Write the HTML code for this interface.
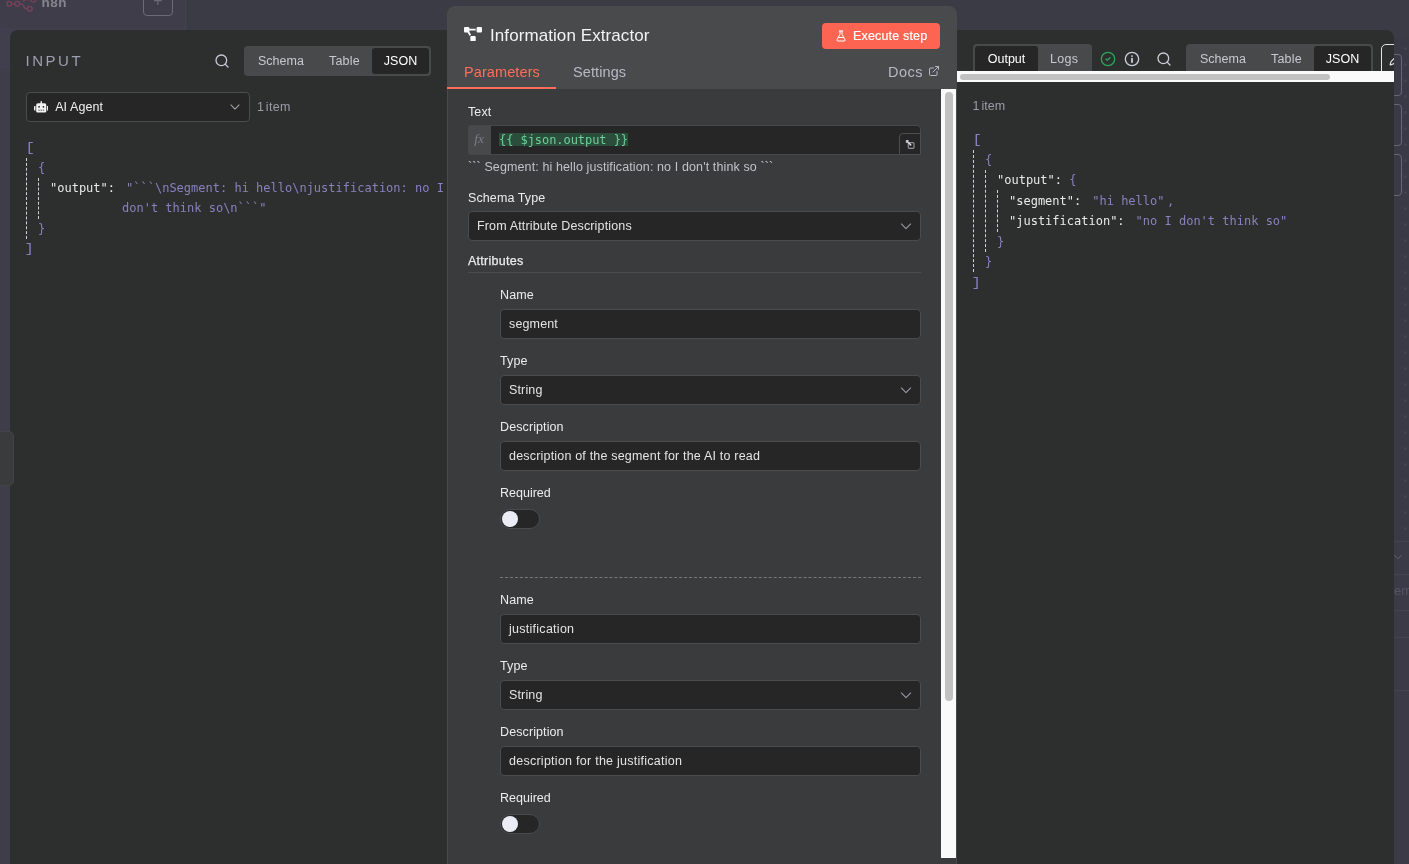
<!DOCTYPE html>
<html lang="en">
<head>
<meta charset="utf-8">
<title>n8n - Information Extractor</title>
<style>
*{box-sizing:border-box;margin:0;padding:0}
html,body{width:1409px;height:864px;overflow:hidden}
body{background:#3b3b46;font-family:"Liberation Sans",Arial,sans-serif;color:#e6e6e6;position:relative;font-size:13px}
#root{position:absolute;left:0;top:0;width:1409px;height:864px;overflow:hidden;will-change:transform}
.abs{position:absolute}
svg.abs{z-index:3}
.mono{font-family:"DejaVu Sans Mono","Liberation Mono",monospace}
/* top bar remnants */
#topbar{left:0;top:0;width:185px;height:28px;background:#3e3d49}
#topsep{left:185px;top:0;width:1px;height:30px;background:#43424e}
#logotxt{left:41.5px;top:-5.5px;font-size:13.5px;font-weight:bold;color:#85848f;letter-spacing:.5px}
#plusbtn{left:143px;top:-14px;width:30px;height:30px;border:1px solid #6b6b78;border-radius:4px;color:#6b6b78;font-size:16px;text-align:center;line-height:28px}
/* panels */
#left{left:10px;top:30px;width:440px;height:834px;background:#2d2f2f;border-radius:8px 0 0 0}
#right{left:957px;top:30px;width:437px;height:834px;background:#2d2f2f;border-radius:0 8px 0 0;overflow:hidden}
#main{left:447px;top:6px;width:510px;height:870px;background:#3a3b3d;border-radius:8px;overflow:hidden}
#mainhead{left:-1px;top:0;width:510px;height:83px;background:#494a4c}
#sidetab{left:-1px;top:431px;width:15px;height:55px;background:#3a3b3d;border:1px solid #434446;border-radius:0 5px 5px 0}
.cbox{left:1380px;width:22px;height:42px;border:1px solid #676679;border-radius:4px}
.ptitle{font-size:15px;letter-spacing:2.5px;color:#9c9fae}
.seg{background:#48494b;border-radius:4px;height:30px}
.seg span{position:absolute;top:0;height:30px;line-height:31px;font-size:12.5px;color:#c8c8cf;white-space:nowrap}
.seg .act{top:2px;height:26px;line-height:27px;background:#262626;border-radius:3px;color:#fff;text-align:center}
.items{font-size:12.5px;color:#9b9ca6}
.jl{position:absolute;font-size:12px;line-height:20px;white-space:pre;color:#8b7fc0}
.jl b{font-weight:normal;color:#e9e9e9}
.jl .v{margin-left:11px}
.jl.br{font-family:"Liberation Mono","DejaVu Sans Mono",monospace;transform:scaleX(1.3);transform-origin:2px 50%;margin-top:-1px}
.jl.brr{font-family:"Liberation Mono","DejaVu Sans Mono",monospace;transform:scaleX(1.3);transform-origin:5px 50%}
.vline{position:absolute;width:0;border-left:1px dashed #cdd3da}
.lbl{position:absolute;letter-spacing:.1px;font-size:12.5px;color:#ececec;white-space:nowrap}
.inp{position:absolute;letter-spacing:.15px;height:30px;background:#262626;border:1px solid #4b4c4e;border-radius:4px;font-size:12.5px;line-height:28px;color:#e4e4e4;padding-left:8px;white-space:nowrap}
.tog{position:absolute;width:40px;height:20px;border-radius:10px;background:#262626;border:1px solid #4a4b4d}
.tog i{position:absolute;left:1px;top:1px;width:16px;height:16px;border-radius:50%;background:#ececf6}
</style>
</head>
<body>
<div id="root">
<div class="abs" id="topbar"></div>
<div class="abs" id="topsep"></div>
<div class="abs" style="left:0;top:28px;width:12px;height:836px;background:#3e3d49"></div>
<div class="abs" style="left:0;top:28px;width:185px;height:40px;background:#413f4d"></div>
<svg class="abs" style="left:0;top:0" width="40" height="14" viewBox="0 0 40 14" fill="none" stroke="#7c4159" stroke-width="1.25"><circle cx="9.2" cy="3.8" r="2.4"/><circle cx="17.2" cy="3.8" r="2.4"/><path d="M11.6 3.8h3.2M19.6 3.8h1.2c1.6 0 2.4.6 2.9 2.2.4 1.8 1.2 2.7 3.3 2.8M23.3 1.8c.5-1.6 1.6-2.2 3.3-2.2h4"/><circle cx="29.8" cy="8.8" r="2.4"/><circle cx="33.4" cy="-0.4" r="2.4"/></svg>
<div class="abs" id="logotxt">n8n</div>
<div class="abs" id="plusbtn">+</div>

<!-- canvas remnants on right -->
<div class="abs" style="left:1394px;top:37px;width:15px;height:827px;background-color:#3a3946;background-image:radial-gradient(circle,#7b7a92 0,#7b7a92 .4px,transparent .8px);background-size:16px 16px;background-position:3.5px 3.5px"></div>
<div class="abs cbox" style="top:54px"></div>
<div class="abs cbox" style="top:104px"></div>
<div class="abs cbox" style="top:154px"></div>
<div class="abs" style="left:1394px;top:541px;width:15px;height:323px;background:#3b3a47"></div>
<div class="abs" style="left:1394px;top:541px;width:15px;height:1px;background:#444352"></div>
<div class="abs" style="left:1394px;top:574px;width:15px;height:1px;background:#444352"></div>
<div class="abs" style="left:1394px;top:610px;width:15px;height:1px;background:#444352"></div>
<div class="abs" style="left:1394px;top:637px;width:15px;height:1px;background:#444352"></div>
<div class="abs" style="left:1394px;top:690px;width:15px;height:1px;background:#444352"></div>
<svg class="abs" style="left:1392px;top:551px" width="12" height="12" viewBox="0 0 24 24" fill="none" stroke="#5f5e6e" stroke-width="2" stroke-linecap="round" stroke-linejoin="round"><path d="m5 8.5 7 7 7-7"/></svg>
<div class="abs" style="left:1394px;top:583px;font-size:13px;color:#565565;white-space:nowrap">em</div>
<!-- LEFT PANEL -->
<div class="abs" id="left">
  <div class="abs ptitle" style="left:15.6px;top:22px">INPUT</div>
  <div class="abs seg" style="left:234px;top:16px;width:187px">
    <span style="left:14px">Schema</span><span style="left:85px;letter-spacing:.2px">Table</span><span class="act" style="left:128px;width:57px">JSON</span>
  </div>
  <svg class="abs" style="left:204.3px;top:23.3px" width="16" height="16" viewBox="0 0 24 24" fill="none" stroke="#c9ccd9" stroke-width="1.9" stroke-linecap="round" stroke-linejoin="round"><circle cx="11" cy="11" r="8"/><path d="m21 21-4.3-4.3"/></svg>
  <div class="inp" style="left:16px;top:62px;width:224px;padding-left:28.2px;letter-spacing:.08px;color:#f0f0f0">AI Agent</div>
  <svg class="abs" style="left:23.6px;top:71.2px" width="14.5" height="11.6" viewBox="0 0 640 512" fill="#f4f4f4"><path d="M32,224H64V416H32A31.96166,31.96166,0,0,1,0,384V256A31.96166,31.96166,0,0,1,32,224Zm512-48V448a64.06328,64.06328,0,0,1-64,64H160a64.06328,64.06328,0,0,1-64-64V176a79.974,79.974,0,0,1,80-80H288V32a32,32,0,0,1,64,0V96H464A79.974,79.974,0,0,1,544,176ZM264,256a40,40,0,1,0-40,40A39.997,39.997,0,0,0,264,256Zm-8,128H192v32h64Zm96,0H288v32h64ZM456,256a40,40,0,1,0-40,40A39.997,39.997,0,0,0,456,256Zm-8,128H384v32h64ZM640,256V384a31.96166,31.96166,0,0,1-32,32H576V224h32A31.96166,31.96166,0,0,1,640,256Z"/></svg>
  <svg class="abs" style="left:217.8px;top:70.3px" width="14" height="14" viewBox="0 0 24 24" fill="none" stroke="#a4a5af" stroke-width="1.8" stroke-linecap="round" stroke-linejoin="round"><path d="m5 8.5 7 7 7-7"/></svg>
  <div class="abs items" style="left:247px;top:70px;word-spacing:-2.2px;letter-spacing:.3px">1 item</div>
  <div class="jl mono br" style="left:16px;top:109px">[</div>
  <div class="jl mono" style="left:28px;top:128px">{</div>
  <div class="jl mono" style="left:40px;top:148px"><b>"output":</b><span class="v">"```\nSegment: hi hello\njustification: no I</span></div>
  <div class="jl mono" style="left:112px;top:168px">don't think so\n```"</div>
  <div class="jl mono" style="left:28px;top:189px">}</div>
  <div class="jl mono brr" style="left:16px;top:209px">]</div>
  <div class="vline" style="left:16px;top:127.5px;height:81.4px"></div>
  <div class="vline" style="left:28px;top:147.7px;height:41.5px"></div>
</div>
<div class="abs" id="sidetab"></div>

<!-- RIGHT PANEL -->
<div class="abs" id="right">
  <div class="abs seg" style="left:16px;top:14px;width:119px;height:32px">
    <span class="act" style="left:2px;width:63px;height:28px;line-height:26px">Output</span><span style="left:77px;line-height:30px;letter-spacing:.3px">Logs</span>
  </div>
  <div class="abs seg" style="left:229px;top:14px;width:187px;height:32px">
    <span style="left:14px;line-height:30px">Schema</span><span style="left:85px;line-height:30px;letter-spacing:.2px">Table</span><span class="act" style="left:128px;width:57px;height:28px;line-height:26px">JSON</span>
  </div>
  <div class="abs" style="left:424px;top:14px;width:40px;height:32px;border:1.5px solid #e4e4e4;border-radius:5px"></div>
  <svg class="abs" style="left:432px;top:22px" width="14" height="14" viewBox="0 0 24 24" fill="none" stroke="#e4e4e4" stroke-width="2" stroke-linecap="round" stroke-linejoin="round"><path d="M21.174 6.812a1 1 0 0 0-3.986-3.987L3.842 16.174a2 2 0 0 0-.5.83l-1.321 4.352a.5.5 0 0 0 .623.622l4.353-1.32a2 2 0 0 0 .83-.497z"/></svg>
  <svg class="abs" style="left:143px;top:21px" width="16" height="16" viewBox="0 0 24 24" fill="none" stroke="#2aa55a" stroke-width="2" stroke-linecap="round" stroke-linejoin="round"><circle cx="12" cy="12" r="10"/><path d="m9 12 2 2 4-4"/></svg>
  <svg class="abs" style="left:167px;top:21px" width="16" height="16" viewBox="0 0 24 24" fill="none" stroke="#c9ccd9" stroke-width="2" stroke-linecap="round" stroke-linejoin="round"><circle cx="12" cy="12" r="10"/><path d="M12 16.5v-5" stroke-width="2.8"/><path d="M12 7.6h.01" stroke-width="2.8"/></svg>
  <svg class="abs" style="left:199px;top:21px" width="16" height="16" viewBox="0 0 24 24" fill="none" stroke="#c9ccd9" stroke-width="2" stroke-linecap="round" stroke-linejoin="round"><circle cx="11" cy="11" r="8"/><path d="m21 21-4.3-4.3"/></svg>
  <div class="abs" style="left:0;top:41px;width:437px;height:11px;background:#fafafa;z-index:5"></div>
  <div class="abs" style="left:3px;top:44px;width:370px;height:6px;border-radius:3px;background:#c1c1c1;z-index:6"></div>
  <div class="abs items" style="left:15.5px;top:69px;word-spacing:-1.5px">1 item</div>
  <div class="jl mono br" style="left:16px;top:101px">[</div>
  <div class="jl mono" style="left:28px;top:120px">{</div>
  <div class="jl mono" style="left:40px;top:140px"><b>"output":</b> {</div>
  <div class="jl mono" style="left:52px;top:161px"><b>"segment":</b><span class="v">"hi hello"<span style="margin-left:2.5px">,</span></span></div>
  <div class="jl mono" style="left:52px;top:181px"><b>"justification":</b><span class="v">"no I don't think so"</span></div>
  <div class="jl mono" style="left:40px;top:202px">}</div>
  <div class="jl mono" style="left:28px;top:222px">}</div>
  <div class="jl mono brr" style="left:16px;top:243px">]</div>
  <div class="vline" style="left:16px;top:119.7px;height:122.8px"></div>
  <div class="vline" style="left:28px;top:139.8px;height:82px"></div>
  <div class="vline" style="left:40px;top:160.4px;height:41.6px"></div>
</div>

<!-- MAIN PANEL -->
<div class="abs" id="main"><div class="abs" style="left:1px;top:0;width:509px;height:870px">
  <div class="abs" id="mainhead"></div>
  <div class="abs" style="left:-1px;top:83px;width:1px;height:790px;background:#494a4c"></div>
  <div class="abs" style="left:508px;top:83px;width:1px;height:790px;background:#494a4c"></div>
  <svg class="abs" style="left:16px;top:21px" width="18" height="14.4" viewBox="0 0 640 512" fill="#fbfbfb"><path d="M384 320H256c-17.67 0-32 14.33-32 32v128c0 17.67 14.33 32 32 32h128c17.67 0 32-14.33 32-32V352c0-17.67-14.33-32-32-32zM192 32c0-17.67-14.33-32-32-32H32C14.33 0 0 14.33 0 32v128c0 17.67 14.33 32 32 32h95.72l73.16 128.04C211.98 300.98 232.4 288 256 288h.28L192 175.51V128h224V64H192V32zM608 0H480c-17.67 0-32 14.33-32 32v128c0 17.67 14.33 32 32 32h128c17.67 0 32-14.33 32-32V32c0-17.67-14.33-32-32-32z"/></svg>
  <div class="abs" style="left:42px;top:20px;font-size:17px;letter-spacing:.08px;color:#f3f3f3;white-space:nowrap">Information Extractor</div>
  <div class="abs" style="left:374px;top:17px;width:118px;height:26px;background:#fd6451;border-radius:4px;color:#fff;font-size:12.5px;line-height:26px;padding-left:31px;white-space:nowrap;letter-spacing:.17px;-webkit-text-stroke:.2px #fff">Execute step</div>
  <svg class="abs" style="left:387px;top:24px" width="12" height="12" viewBox="0 0 24 24" fill="none" stroke="#fff" stroke-width="2" stroke-linecap="round" stroke-linejoin="round"><path d="M14 2v6a2 2 0 0 0 .245.96l5.51 10.08A2 2 0 0 1 18 22H6a2 2 0 0 1-1.755-2.96l5.51-10.08A2 2 0 0 0 10 8V2"/><path d="M6.453 15h11.094"/><path d="M8.5 2h7"/></svg>
  <svg class="abs" style="left:480px;top:59px" width="12" height="12" viewBox="0 0 24 24" fill="none" stroke="#b9b9c6" stroke-width="2" stroke-linecap="round" stroke-linejoin="round"><path d="M15 3h6v6"/><path d="M10 14 21 3"/><path d="M18 13v6a2 2 0 0 1-2 2H5a2 2 0 0 1-2-2V8a2 2 0 0 1 2-2h6"/></svg>
  <div class="abs" style="left:16px;top:58px;font-size:14.5px;letter-spacing:.1px;color:#ff6d5a">Parameters</div>
  <div class="abs" style="left:125px;top:58px;font-size:14.5px;letter-spacing:.1px;color:#b9b9c6">Settings</div>
  <div class="abs" style="left:440px;top:58px;font-size:14.5px;letter-spacing:.45px;color:#b9b9c6">Docs</div>
  <div class="abs" style="left:-1px;top:81px;width:109px;height:2px;background:#ff6d5a"></div>
  <!-- scrollbar -->
  <div class="abs" style="left:493px;top:83px;width:15px;height:769px;background:#fafafa"></div>
  <div class="abs" style="left:497px;top:86px;width:8px;height:609px;border-radius:4px;background:#c1c1c1"></div>

  <div class="lbl" style="left:20px;top:99px">Text</div>
  <div class="abs" style="left:20px;top:119px;width:453px;height:30px;background:#262626;border-radius:4px;border:1px solid #48494b"></div>
  <div class="abs" style="left:20px;top:119px;width:23px;height:30px;background:#48494b;border-radius:4px 0 0 4px;font-family:'Liberation Serif',serif;font-style:italic;font-size:13.5px;color:#7d7d85;text-align:center;line-height:28px;padding-right:1px">fx</div>
  <div class="abs mono" style="left:51px;top:126.8px;padding-top:2.5px;font-size:12px;line-height:10.6px;color:#6fcf97;background:#2b4d3c;white-space:pre;letter-spacing:-.06px">{{ $json.output }}</div>
  <div class="abs" style="left:451px;top:127px;width:22px;height:22px;background:#262626;border:1px solid #4d4e50;border-radius:4px 0 0 0"></div>
  <div class="abs" style="left:20px;top:154px;font-size:12.5px;letter-spacing:.115px;color:#c2c2c9;white-space:nowrap">``` Segment: hi hello justification: no I don't think so ```</div>

  <svg class="abs" style="left:450.8px;top:213px" width="14" height="14" viewBox="0 0 24 24" fill="none" stroke="#9a9ba5" stroke-width="1.8" stroke-linecap="round" stroke-linejoin="round"><path d="m4 8.5 8 8 8-8"/></svg>
  <svg class="abs" style="left:450.8px;top:377px" width="14" height="14" viewBox="0 0 24 24" fill="none" stroke="#9a9ba5" stroke-width="1.8" stroke-linecap="round" stroke-linejoin="round"><path d="m4 8.5 8 8 8-8"/></svg>
  <svg class="abs" style="left:450.8px;top:682px" width="14" height="14" viewBox="0 0 24 24" fill="none" stroke="#9a9ba5" stroke-width="1.8" stroke-linecap="round" stroke-linejoin="round"><path d="m4 8.5 8 8 8-8"/></svg>
  <svg class="abs" style="left:457.4px;top:133.2px" width="10" height="10" viewBox="0 0 10 10" fill="none" stroke-linecap="round" stroke-linejoin="round"><rect x="3.3" y="3.6" width="5.7" height="5.7" rx="1" stroke="#909096" stroke-width="1.2"/><path d="M5.7 5.9 1.8 2" stroke="#dcdce0" stroke-width="1.5"/><path d="M1.4 3.4V1.6h1.8" stroke="#c4c4c8" stroke-width="1.1"/></svg>
  <div class="lbl" style="left:20px;top:185px">Schema Type</div>
  <div class="inp" style="left:20px;top:205px;width:453px">From Attribute Descriptions</div>
  <div class="lbl" style="left:20px;top:248px;-webkit-text-stroke:.25px #ececec;letter-spacing:.27px">Attributes</div>
  <div class="abs" style="left:20px;top:266px;width:453px;height:1px;background:#4b4c4e"></div>

  <div class="lbl" style="left:52px;top:282px">Name</div>
  <div class="inp" style="left:52px;top:303px;width:421px">segment</div>
  <div class="lbl" style="left:52px;top:348px">Type</div>
  <div class="inp" style="left:52px;top:369px;width:421px">String</div>
  <div class="lbl" style="left:52px;top:414px">Description</div>
  <div class="inp" style="left:52px;top:435px;width:421px;letter-spacing:.19px">description of the segment for the AI to read</div>
  <div class="lbl" style="left:52px;top:480px;letter-spacing:0">Required</div>
  <div class="tog" style="left:52px;top:503px"><i></i></div>

  <div class="abs" style="left:52px;top:571px;width:421px;height:0;border-top:1px dashed #77787c"></div>

  <div class="lbl" style="left:52px;top:587px">Name</div>
  <div class="inp" style="left:52px;top:608px;width:421px;letter-spacing:.27px">justification</div>
  <div class="lbl" style="left:52px;top:653px">Type</div>
  <div class="inp" style="left:52px;top:674px;width:421px">String</div>
  <div class="lbl" style="left:52px;top:719px">Description</div>
  <div class="inp" style="left:52px;top:740px;width:421px;letter-spacing:.26px">description for the justification</div>
  <div class="lbl" style="left:52px;top:785px;letter-spacing:0">Required</div>
  <div class="tog" style="left:52px;top:808px"><i></i></div>
</div></div>
</div>
</body>
</html>
